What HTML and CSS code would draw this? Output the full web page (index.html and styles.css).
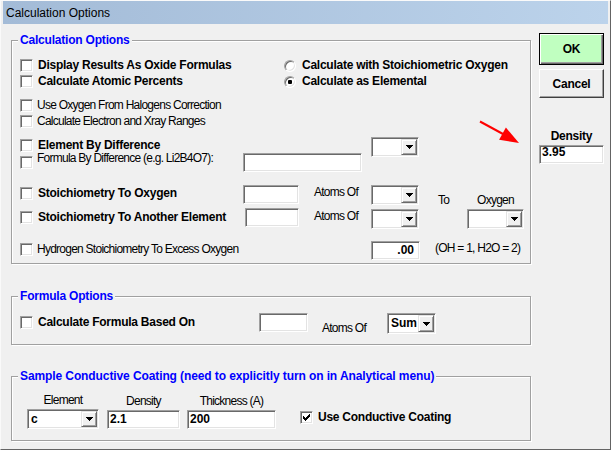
FILE: index.html
```html
<!DOCTYPE html>
<html lang="en">
<head>
<meta charset="utf-8">
<title>Calculation Options</title>
<link rel="stylesheet" href="styles.css">
</head>
<body>
<div class="window">
  <div class="titlebar">Calculation Options</div>
  <div class="client">
    <div class="left">
      <section class="group g1">
        <div class="legend">Calculation Options</div>
        <div class="row ra">
          <label class="lead w264"><span class="cb"></span><span class="b">Display Results As Oxide Formulas</span></label>
          <label class="lead rad"><span class="rb"></span><span class="b">Calculate with Stoichiometric Oxygen</span></label>
        </div>
        <div class="row rb-row">
          <label class="lead w264"><span class="cb"></span><span class="b">Calculate Atomic Percents</span></label>
          <label class="lead rad"><span class="rb"><span class="dot"></span></span><span class="b">Calculate as Elemental</span></label>
        </div>
        <div class="row rc">
          <label class="lead n"><span class="cb"></span><span class="t">Use Oxygen From Halogens Correction</span></label>
        </div>
        <div class="row rd">
          <label class="lead n"><span class="cb"></span><span class="t">Calculate Electron and Xray Ranges</span></label>
        </div>
        <div class="row re">
          <label class="lead w351 mt2"><span class="cb"></span><span class="b">Element By Difference</span></label>
          <div class="combo w48"><span class="val"></span><span class="dd"><svg width="7" height="4" viewBox="0 0 7 4"><path d="M0 0h7v1H0zM1 1h5v1H1zM2 2h3v1H2zM3 3h1v1H3z"/></svg></span></div>
        </div>
        <div class="row rf">
          <label class="lead n w223 shifted"><span class="cb"></span><span class="t">Formula By Difference (e.g. Li2B4O7):</span></label>
          <div class="tb w119"></div>
        </div>
        <div class="pair">
          <div class="pair-rows">
            <div class="row rg">
              <label class="lead w223 mt2"><span class="cb"></span><span class="b">Stoichiometry To Oxygen</span></label>
              <div class="tb w56"></div>
              <span class="t atoms mt1">Atoms Of</span>
              <div class="combo w48"><span class="val"></span><span class="dd"><svg width="7" height="4" viewBox="0 0 7 4"><path d="M0 0h7v1H0zM1 1h5v1H1zM2 2h3v1H2zM3 3h1v1H3z"/></svg></span></div>
            </div>
            <div class="row rh">
              <label class="lead w225 mt3"><span class="cb"></span><span class="b">Stoichiometry To Another Element</span></label>
              <div class="tb w54"></div>
              <span class="t atoms mt2">Atoms Of</span>
              <div class="combo w48 mt1"><span class="val"></span><span class="dd"><svg width="7" height="4" viewBox="0 0 7 4"><path d="M0 0h7v1H0zM1 1h5v1H1zM2 2h3v1H2zM3 3h1v1H3z"/></svg></span></div>
            </div>
          </div>
          <span class="t to">To</span>
          <div class="oxy">
            <span class="t">Oxygen</span>
            <div class="combo w57"><span class="val"></span><span class="dd"><svg width="7" height="4" viewBox="0 0 7 4"><path d="M0 0h7v1H0zM1 1h5v1H1zM2 2h3v1H2zM3 3h1v1H3z"/></svg></span></div>
          </div>
        </div>
        <div class="row ri">
          <label class="lead n w351 mt2"><span class="cb"></span><span class="t">Hydrogen Stoichiometry To Excess Oxygen</span></label>
          <div class="tb w49 ralign">.00</div>
          <span class="t paren mt1">(OH = 1, H2O = 2)</span>
        </div>
      </section>

      <section class="group g2">
        <div class="legend">Formula Options</div>
        <div class="row r2">
          <label class="lead w239 mt3"><span class="cb"></span><span class="b">Calculate Formula Based On</span></label>
          <div class="tb w49"></div>
          <span class="t atoms2">Atoms Of</span>
          <div class="combo w49 h21"><span class="val">Sum</span><span class="dd"><svg width="7" height="4" viewBox="0 0 7 4"><path d="M0 0h7v1H0zM1 1h5v1H1zM2 2h3v1H2zM3 3h1v1H3z"/></svg></span></div>
        </div>
      </section>

      <section class="group g3">
        <div class="legend">Sample Conductive Coating (need to explicitly turn on in Analytical menu)</div>
        <div class="coat">
          <div class="col w72">
            <span class="t">Element</span>
            <div class="combo w72 ctl"><span class="val">c</span><span class="dd"><svg width="7" height="4" viewBox="0 0 7 4"><path d="M0 0h7v1H0zM1 1h5v1H1zM2 2h3v1H2zM3 3h1v1H3z"/></svg></span></div>
          </div>
          <div class="col w73 gap8">
            <span class="t">Density</span>
            <div class="tb w73 ctl">2.1</div>
          </div>
          <div class="col w89 gap7">
            <span class="t">Thickness (A)</span>
            <div class="tb w89 ctl">200</div>
          </div>
          <label class="lead use"><span class="cb"><svg width="7" height="7" viewBox="0 0 7 7"><path d="M6 0h1v1H6zM5 1h2v1H5zM0 2h1v1H0zM4 2h3v1H4zM0 3h2v1H0zM3 3h3v1H3zM0 4h5v1H0zM1 5h3v1H1zM2 6h1v1H2z"/></svg></span><span class="b">Use Conductive Coating</span></label>
        </div>
      </section>
    </div>

    <div class="side">
      <div class="btn ok">OK</div>
      <div class="btn cancel">Cancel</div>
      <div class="b dlabel">Density</div>
      <div class="tb w65 density">3.95</div>
    </div>
  </div>

  <svg class="arrow" width="44" height="28" viewBox="0 0 44 28">
    <line x1="2" y1="2.5" x2="25" y2="15" stroke="#ff0000" stroke-width="2"/>
    <polygon points="41,24 21.1,20.8 27.9,8.6" fill="#ff0000"/>
  </svg>
</div>
</body>
</html>
```

FILE: styles.css
```css
* { box-sizing: border-box; }
html, body { margin: 0; background: #ffffff; }
body {
  font-family: "Liberation Sans", Arial, sans-serif;
  font-size: 12px;
  color: #000;
}

.window {
  position: relative;
  width: 611px;
  height: 450px;
  border: 1px solid;
  border-color: #fafafa #646464 #646464 #fafafa;
  padding: 0 2px;
  background: #f0f0f0;
  display: flex;
  flex-direction: column;
}

.titlebar {
  flex: none;
  height: 23px;
  padding: 2px 0 0 3px;
  line-height: 21px;
  font-size: 12px;
  background: linear-gradient(to right, #a3bbd7, #bcd3eb);
}

.client { display: flex; padding: 9px 0 0 8px; }
.left { flex: none; width: 520px; padding-top: 7px; }
.side { flex: none; width: 65px; margin-left: 8px; display: flex; flex-direction: column; }

.group {
  border: 1px solid #a0a0a0;
  box-shadow: inset 1px 1px 0 #fff, 1px 1px 0 #fff;
}
.g1 { height: 224px; }
.g2 { height: 49px; margin-top: 32px; }
.g3 { height: 65px; margin-top: 31px; }

.legend {
  width: fit-content;
  margin: -8px 0 0 6px;
  padding: 0 2px;
  height: 15px;
  line-height: 15px;
  font-weight: bold;
  color: #0000ff;
  letter-spacing: -0.2px;
  background: #f0f0f0;
  white-space: nowrap;
}
.g3 .legend { letter-spacing: -0.1px; }

.b { font-weight: bold; letter-spacing: -0.25px; line-height: 13px; white-space: nowrap; }
.t {
  font-family: "Liberation Sans", Arial, sans-serif;
  font-size: 12px;
  letter-spacing: -0.75px;
  line-height: 13px;
  white-space: nowrap;
}

.row { display: flex; align-items: flex-start; padding-left: 8px; }
.ra { margin-top: 11px; height: 13px; }
.rb-row { margin-top: 3px; height: 13px; }
.rc { margin-top: 11px; height: 13px; }
.rd { margin-top: 3px; height: 13px; }
.re { margin-top: 9px; height: 16px; }
.rf { margin-top: 0; height: 19px; }
.rg { height: 20px; }
.rh { margin-top: 3px; height: 21px; }
.ri { margin-top: 12px; height: 19px; }
.r2 { margin-top: 9px; height: 21px; }

.lead { flex: none; display: flex; align-items: center; gap: 5px; height: 13px; }
.lead.n { gap: 4px; }
.lead.rad { gap: 6px; }
.lead.shifted { align-items: flex-start; height: 19px; }
.lead.shifted .cb { margin-top: 3px; }
.lead.shifted .t { margin-top: -1px; }

.mt1 { margin-top: 1px; }
.mt2 { margin-top: 2px; }
.mt3 { margin-top: 3px; }

.w48 { width: 48px; }
.w49 { width: 49px; }
.w54 { width: 54px; }
.w56 { width: 56px; }
.w57 { width: 57px; }
.w65 { width: 65px; }
.w72 { width: 72px; }
.w73 { width: 73px; }
.w89 { width: 89px; }
.w119 { width: 119px; }
.w223 { width: 223px; }
.w225 { width: 225px; }
.w239 { width: 239px; }
.w264 { width: 264px; }
.w351 { width: 351px; }

.cb {
  flex: none;
  width: 13px;
  height: 13px;
  background: #fff;
  border: 1px solid;
  border-color: #a0a0a0 #fff #fff #a0a0a0;
  box-shadow: inset 1px 1px 0 #696969, inset -1px -1px 0 #e3e3e3;
  display: flex;
  align-items: center;
  justify-content: center;
}
.cb svg { display: block; }

.rb {
  flex: none;
  width: 12px;
  height: 12px;
  border-radius: 50%;
  background: #fff;
  border: 1px solid;
  border-color: #a0a0a0 #fff #fff #a0a0a0;
  box-shadow: inset 1px 1px 0 #696969, inset -1px -1px 0 #e3e3e3;
  display: flex;
  align-items: center;
  justify-content: center;
}
.dot { width: 4px; height: 4px; border-radius: 1px; background: #000; }

.tb {
  flex: none;
  height: 19px;
  background: #fff;
  border: 1px solid;
  border-color: #a0a0a0 #fff #fff #a0a0a0;
  box-shadow: inset 1px 1px 0 #696969, inset -1px -1px 0 #e3e3e3;
  font-weight: bold;
  line-height: 17px;
  padding: 0 2px;
  white-space: nowrap;
}
.tb.ralign { text-align: right; padding-right: 5px; }
.tb.density { line-height: 13px; margin-top: 2px; }

.combo {
  flex: none;
  display: flex;
  height: 20px;
  padding: 1px;
  background: #fff;
  border: 1px solid;
  border-color: #a0a0a0 #fff #fff #a0a0a0;
  box-shadow: inset 1px 1px 0 #696969, inset -1px -1px 0 #e3e3e3;
}
.combo.h21 { height: 21px; }
.combo .val { flex: 1; font-weight: bold; line-height: 16px; padding-left: 2px; }
.combo .dd {
  flex: none;
  width: 16px;
  background: #f0f0f0;
  border: 1px solid;
  border-color: #e3e3e3 #696969 #696969 #e3e3e3;
  box-shadow: inset 1px 1px 0 #fff, inset -1px -1px 0 #a0a0a0;
  display: flex;
  align-items: center;
  justify-content: center;
}
.combo .dd svg { display: block; }

.atoms { margin-left: 15px; width: 57px; }
.atoms2 { margin-left: 14px; margin-top: 9px; width: 65px; }
.paren { margin-left: 15px; }

.pair { display: flex; margin-top: 13px; }
.pair-rows { display: flex; flex-direction: column; }
.to { margin-left: 19px; margin-top: 9px; width: 29px; }
.oxy { width: 57px; display: flex; flex-direction: column; align-items: center; }
.oxy .t { margin-top: 9px; }
.oxy .combo { margin-top: 2px; }

.coat { display: flex; align-items: flex-end; padding-left: 15px; margin-top: 10px; }
.col { flex: none; display: flex; flex-direction: column; align-items: center; }
.col .ctl { margin-top: 2px; }
.gap8 { margin-left: 8px; }
.gap7 { margin-left: 7px; }
.lead.use { margin-left: 24px; margin-bottom: 5px; }

.btn {
  display: flex;
  align-items: center;
  justify-content: center;
  font-weight: bold;
  letter-spacing: -0.25px;
}
.ok {
  height: 32px;
  background: #c0ffc0;
  border: 1px solid #000;
  box-shadow: inset 1px 1px 0 #fff, inset -1px -1px 0 #696969, inset -2px -2px 0 #a0a0a0;
}
.cancel {
  height: 29px;
  margin-top: 4px;
  background: #f0f0f0;
  border: 1px solid;
  border-color: #fff #404040 #404040 #fff;
  box-shadow: inset -1px -1px 0 #a0a0a0;
}
.dlabel { margin-top: 32px; text-align: center; }

.arrow {
  position: absolute;
  left: 477px;
  top: 118px;
  pointer-events: none;
}
```
